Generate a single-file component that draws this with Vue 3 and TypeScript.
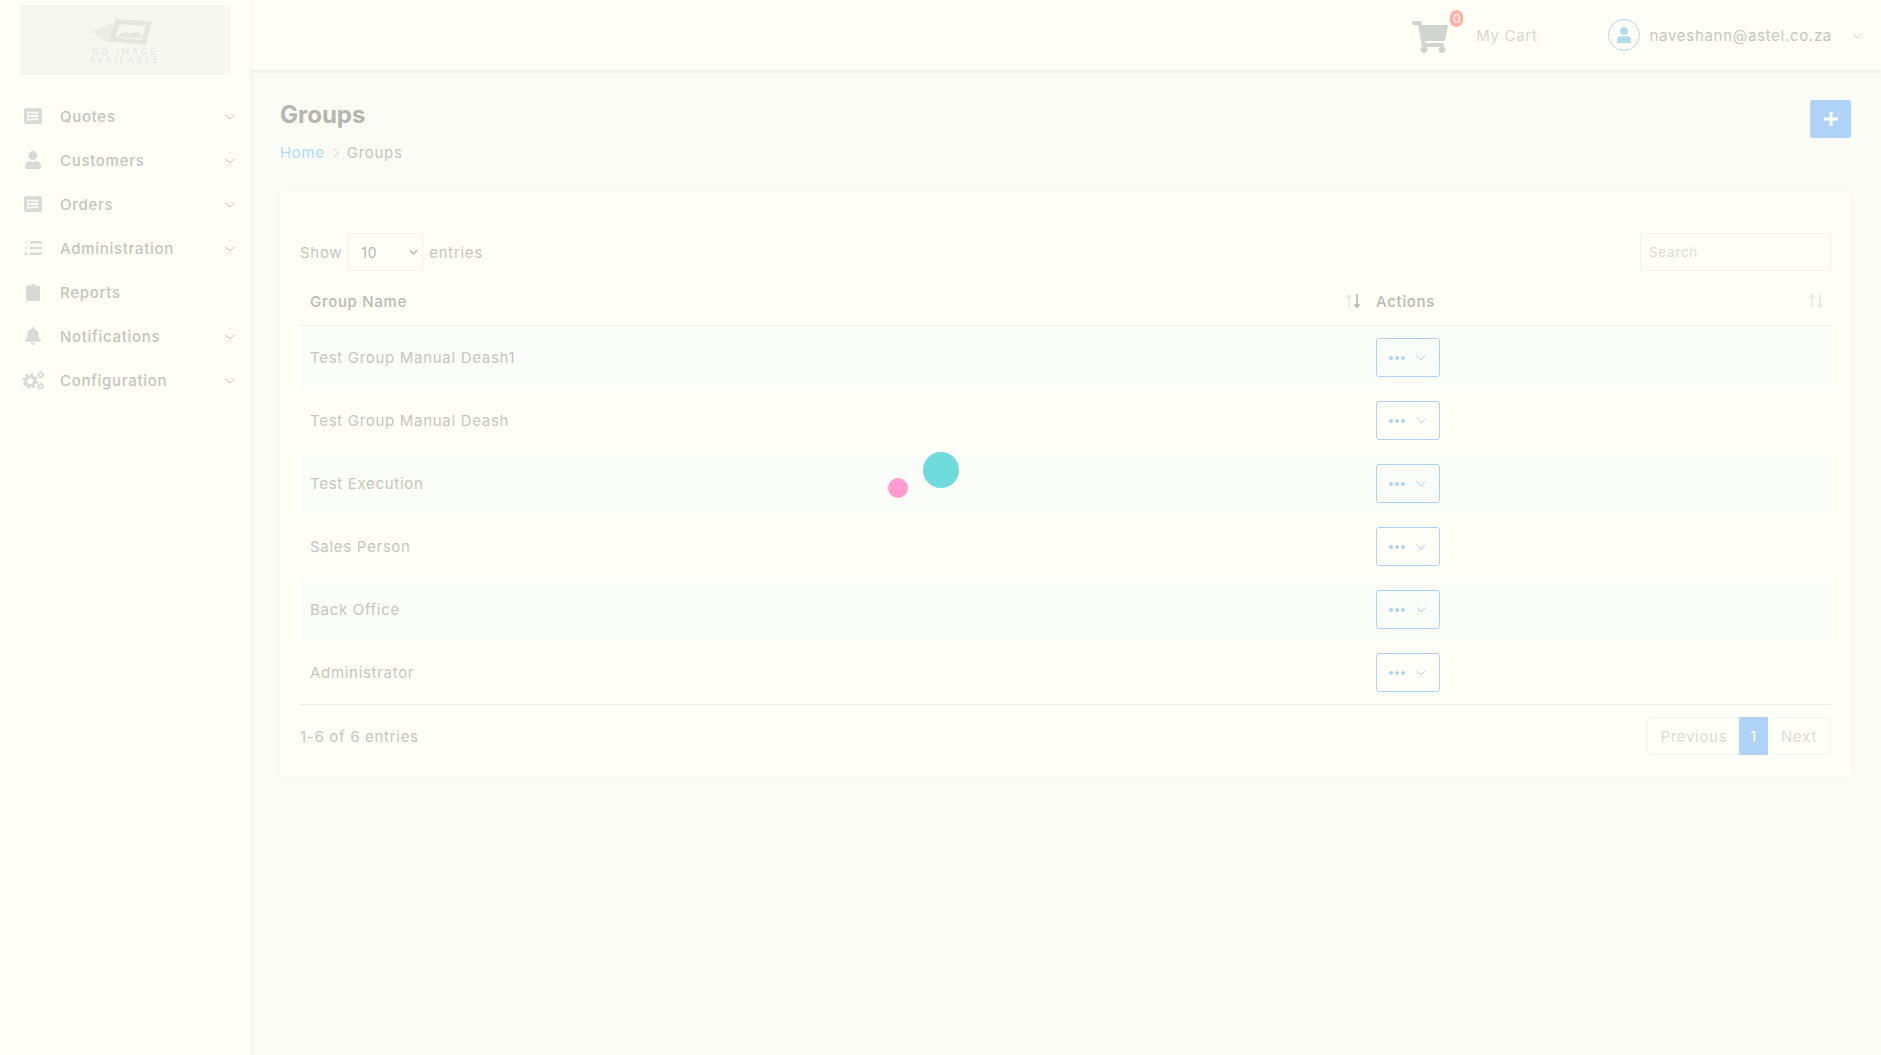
<script setup lang="ts">
type MenuItem = { label: string; icon: string; sub: boolean }

const menu: MenuItem[] = [
  { label: 'Quotes', icon: 'list', sub: true },
  { label: 'Customers', icon: 'user', sub: true },
  { label: 'Orders', icon: 'list', sub: true },
  { label: 'Administration', icon: 'tasks', sub: true },
  { label: 'Reports', icon: 'clipboard', sub: false },
  { label: 'Notifications', icon: 'bell', sub: true },
  { label: 'Configuration', icon: 'cogs', sub: true },
]

const groups = [
  'Test Group Manual Deash1',
  'Test Group Manual Deash',
  'Test Execution',
  'Sales Person',
  'Back Office',
  'Administrator',
]
</script>

<template>
  <div class="layout">
    <aside class="sidebar">
      <div class="logo">
        <svg class="logo-pic" viewBox="0 0 76 30" width="76" height="26">
          <path d="M0 14 L24 4 L24 27 L16 27 Z" fill="#ecede7" />
          <path d="M27 0 L69 3 L62 30 L20 26 Z" fill="#e6e7e1" />
          <path d="M32 6 L62 8 L57 24 L27 21 Z" fill="#f7f7f2" />
          <path d="M31 18 L38 14 L44 17 L50 15 L57 17 L56 22 L30 21 Z" fill="#e6e7e1" />
        </svg>
        <div class="logo-text">NO IMAGE<br />AVAILABLE</div>
      </div>
      <nav class="menu">
        <a v-for="item in menu" :key="item.label" class="menu-item">
          <span class="menu-icon">
            <svg v-if="item.icon === 'list'" viewBox="0 0 512 512" width="18" height="18">
              <path fill="currentColor" d="M464 480H48c-26.51 0-48-21.49-48-48V80c0-26.51 21.49-48 48-48h416c26.51 0 48 21.49 48 48v352c0 26.51-21.49 48-48 48zM128 120c-22.091 0-40 17.909-40 40s17.909 40 40 40 40-17.909 40-40-17.909-40-40-40zm0 96c-22.091 0-40 17.909-40 40s17.909 40 40 40 40-17.909 40-40-17.909-40-40-40zm0 96c-22.091 0-40 17.909-40 40s17.909 40 40 40 40-17.909 40-40-17.909-40-40-40zm288-136v-32c0-6.627-5.373-12-12-12H204c-6.627 0-12 5.373-12 12v32c0 6.627 5.373 12 12 12h200c6.627 0 12-5.373 12-12zm0 96v-32c0-6.627-5.373-12-12-12H204c-6.627 0-12 5.373-12 12v32c0 6.627 5.373 12 12 12h200c6.627 0 12-5.373 12-12zm0 96v-32c0-6.627-5.373-12-12-12H204c-6.627 0-12 5.373-12 12v32c0 6.627 5.373 12 12 12h200c6.627 0 12-5.373 12-12z" />
            </svg>
            <svg v-else-if="item.icon === 'user'" viewBox="0 0 448 512" width="16" height="18">
              <path fill="currentColor" d="M224 256c70.7 0 128-57.3 128-128S294.7 0 224 0 96 57.3 96 128s57.3 128 128 128zm89.6 32h-16.7c-22.2 10.2-46.9 16-72.9 16s-50.6-5.8-72.9-16h-16.7C60.2 288 0 348.2 0 422.4V464c0 26.5 21.5 48 48 48h352c26.5 0 48-21.5 48-48v-41.6c0-74.2-60.2-134.4-134.4-134.4z" />
            </svg>
            <svg v-else-if="item.icon === 'tasks'" viewBox="0 0 18 16" width="18" height="16">
              <path fill="none" stroke="currentColor" stroke-width="1" d="M0.5 2 L1.8 3.2 L3.8 0.6 M0.5 7.5 L1.8 8.7 L3.8 6.1" />
              <circle cx="2" cy="14" r="1.5" fill="currentColor" />
              <path fill="currentColor" d="M6 1h12v2.4H6zM6 6.8h12v2.4H6zM6 12.6h12v2.4H6z" />
            </svg>
            <svg v-else-if="item.icon === 'clipboard'" viewBox="0 0 14 18" width="14" height="18">
              <path fill="currentColor" d="M5 2.4 C5 .4 9 .4 9 2.4 H12.6 C13.4 2.4 14 3 14 3.8 V16.6 C14 17.4 13.4 18 12.6 18 H1.4 C.6 18 0 17.4 0 16.6 V3.8 C0 3 .6 2.4 1.4 2.4 Z" />
            </svg>
            <svg v-else-if="item.icon === 'bell'" viewBox="0 0 448 512" width="16" height="18">
              <path fill="currentColor" d="M224 512c35.32 0 63.97-28.65 63.97-64H160.03c0 35.35 28.65 64 63.97 64zm215.39-149.71c-19.32-20.76-55.47-51.99-55.47-154.29 0-77.7-54.48-139.9-127.94-155.16V32c0-17.67-14.32-32-31.98-32s-31.98 14.33-31.98 32v20.84C118.56 68.1 64.08 130.3 64.08 208c0 102.3-36.15 133.53-55.47 154.29-6 6.45-8.66 14.16-8.61 21.71.11 16.4 12.98 32 32.1 32h383.8c19.12 0 32-15.6 32.1-32 .05-7.55-2.61-15.27-8.61-21.71z" />
            </svg>
            <svg v-else viewBox="0 0 24 20" width="23" height="19">
              <g fill="none" stroke="currentColor">
                <circle cx="8.5" cy="10.5" r="4.6" stroke-width="3.2" />
                <circle cx="8.5" cy="10.5" r="7" stroke-width="2.4" stroke-dasharray="3.3 2.2" />
                <circle cx="19.5" cy="4" r="2" stroke-width="1.5" />
                <circle cx="19.5" cy="4" r="3.2" stroke-width="1.4" stroke-dasharray="1.6 1.2" />
                <circle cx="19.5" cy="16" r="2" stroke-width="1.5" />
                <circle cx="19.5" cy="16" r="3.2" stroke-width="1.4" stroke-dasharray="1.6 1.2" />
              </g>
            </svg>
          </span>
          <span class="menu-label">{{ item.label }}</span>
          <svg v-if="item.sub" class="chev" viewBox="0 0 10 6" width="10" height="6">
            <path d="M.5 .5 L5 5 L9.5 .5" fill="none" stroke="currentColor" stroke-width="1" />
          </svg>
        </a>
      </nav>
    </aside>

    <div class="main">
      <header class="topbar">
        <div class="cart">
          <svg class="cart-icon" viewBox="0 0 576 512" width="36" height="32">
            <path fill="#d0d4ce" d="M528.12 301.319l47.273-208C578.806 78.301 567.391 64 551.99 64H159.208l-9.166-44.81C147.758 8.021 137.93 0 126.529 0H24C10.745 0 0 10.745 0 24v16c0 13.255 10.745 24 24 24h69.883l70.248 343.435C147.325 417.1 136 435.222 136 456c0 30.928 25.072 56 56 56s56-25.072 56-56c0-15.674-6.447-29.835-16.824-40h209.647C430.447 426.165 424 440.326 424 456c0 30.928 25.072 56 56 56s56-25.072 56-56c0-22.172-12.888-41.332-31.579-50.405l5.517-24.276c3.413-15.018-8.002-29.319-23.403-29.319H218.117l-6.545-32h293.145c11.206 0 20.92-7.754 23.403-18.681z" />
          </svg>
          <span class="badge">0</span>
          <span class="cart-label">My Cart</span>
        </div>
        <div class="account">
          <span class="avatar">
            <svg viewBox="0 0 448 512" width="14" height="16">
              <path fill="#aedaea" d="M224 256c70.7 0 128-57.3 128-128S294.7 0 224 0 96 57.3 96 128s57.3 128 128 128zm89.6 32h-16.7c-22.2 10.2-46.9 16-72.9 16s-50.6-5.8-72.9-16h-16.7C60.2 288 0 348.2 0 422.4V464c0 26.5 21.5 48 48 48h352c26.5 0 48-21.5 48-48v-41.6c0-74.2-60.2-134.4-134.4-134.4z" />
            </svg>
          </span>
          <span class="email">naveshann@astel.co.za</span>
          <svg class="chev" viewBox="0 0 10 6" width="10" height="6">
            <path d="M.5 .5 L5 5 L9.5 .5" fill="none" stroke="#d0d2ca" stroke-width="1" />
          </svg>
        </div>
      </header>

      <main class="content">
        <div class="page-head">
          <div>
            <h1>Groups</h1>
            <div class="crumbs">
              <a class="crumb-link">Home</a>
              <svg viewBox="0 0 6 10" width="6" height="10">
                <path d="M.5 .5 L5 5 L.5 9.5" fill="none" stroke="#d0d2ca" stroke-width="1" />
              </svg>
              <span>Groups</span>
            </div>
          </div>
          <button class="add-btn" type="button">
            <svg viewBox="0 0 14 14" width="14" height="14">
              <path d="M7 0v14M0 7h14" stroke="#fffff8" stroke-width="3" />
            </svg>
          </button>
        </div>

        <section class="card">
          <div class="table-top">
            <div class="length">
              <span>Show</span>
              <span class="select">10
                <svg viewBox="0 0 10 6" width="9" height="6">
                  <path d="M1 1 L5 5 L9 1" fill="none" stroke="#b5b6ae" stroke-width="1.6" />
                </svg>
              </span>
              <span>entries</span>
            </div>
            <div class="search">Search</div>
          </div>

          <table class="groups">
            <thead>
              <tr>
                <th class="col-name">
                  <div class="th-in">
                    Group Name
                    <span class="sort">
                      <svg viewBox="0 0 16 16" width="16" height="16">
                        <path d="M4 15V2M1.6 4.6 L4 2 L6.4 4.6" fill="none" stroke="#e8e9e3" stroke-width="1.6" />
                        <path d="M12 1v13M9.6 11.4 L12 14 L14.4 11.4" fill="none" stroke="#b5b6ae" stroke-width="1.6" />
                      </svg>
                    </span>
                  </div>
                </th>
                <th class="col-actions">
                  <div class="th-in">
                    Actions
                    <span class="sort">
                      <svg viewBox="0 0 16 16" width="16" height="16">
                        <path d="M4 15V2M1.6 4.6 L4 2 L6.4 4.6" fill="none" stroke="#e8e9e3" stroke-width="1.6" />
                        <path d="M12 1v13M9.6 11.4 L12 14 L14.4 11.4" fill="none" stroke="#e8e9e3" stroke-width="1.6" />
                      </svg>
                    </span>
                  </div>
                </th>
              </tr>
            </thead>
            <tbody>
              <tr v-for="group in groups" :key="group">
                <td>{{ group }}</td>
                <td>
                  <button class="action-btn" type="button">
                    <svg viewBox="0 0 16 4" width="16" height="4">
                      <circle cx="2" cy="2" r="2" fill="#aed3f7" />
                      <circle cx="8" cy="2" r="2" fill="#aed3f7" />
                      <circle cx="14" cy="2" r="2" fill="#aed3f7" />
                    </svg>
                    <svg viewBox="0 0 10 6" width="10" height="6">
                      <path d="M.5 .5 L5 5 L9.5 .5" fill="none" stroke="#aed3f7" stroke-width="1" />
                    </svg>
                  </button>
                </td>
              </tr>
            </tbody>
          </table>

          <div class="table-bottom">
            <span>1-6 of 6 entries</span>
            <div class="pager">
              <span class="page">Previous</span>
              <span class="page active">1</span>
              <span class="page page-next">Next</span>
            </div>
          </div>
        </section>
      </main>
    </div>

    <span class="dot dot-cyan"></span>
    <span class="dot dot-pink"></span>
  </div>
</template>

<style>
html,
body {
  margin: 0;
  background: #fbfcf6;
}
</style>

<style scoped>
.layout {
  display: flex;
  height: 100vh;
  overflow: hidden;
  background: #fbfcf6;
  font-family: Inter, "Noto Sans", sans-serif;
  font-size: 15px;
  letter-spacing: 0.7px;
  color: #c6c6be;
}

.sidebar {
  width: 250px;
  flex-shrink: 0;
  background: #fffff8;
  box-shadow: 0 0 8px rgba(0, 0, 0, 0.05);
  z-index: 2;
  padding: 5px 20px 0;
  box-sizing: border-box;
}

.logo {
  height: 70px;
  width: 210px;
  background: #f7f7f2;
  display: flex;
  flex-direction: column;
  align-items: center;
  padding-top: 14px;
  box-sizing: border-box;
}

.logo-text {
  font-family: "DejaVu Sans", sans-serif;
  font-size: 9px;
  line-height: 8px;
  letter-spacing: 2.6px;
  text-align: center;
  color: #e4e5df;
  margin-top: 3px;
}

.menu {
  margin-top: 19px;
  margin-right: -20px;
  margin-left: -20px;
}

.menu-item {
  display: flex;
  align-items: center;
  height: 44px;
  padding: 0 15px 0 20px;
  font-weight: 500;
  color: #c4c5bc;
}

.menu-icon {
  width: 26px;
  margin-right: 14px;
  display: flex;
  justify-content: center;
  color: #d6dbd6;
}

.menu-label {
  flex: 1;
}

.chev {
  color: #c4c5bc;
  flex-shrink: 0;
  margin-top: 1px;
}

.main {
  flex: 1;
  min-width: 0;
  display: flex;
  flex-direction: column;
}

.topbar {
  height: 70px;
  flex-shrink: 0;
  background: #fffff8;
  box-shadow: 0 1px 5px rgba(0, 0, 0, 0.08);
  display: flex;
  justify-content: flex-end;
  align-items: center;
  padding-right: 19px;
  box-sizing: border-box;
}

.cart {
  position: relative;
  display: flex;
  align-items: center;
  margin-right: 70px;
  margin-top: 1px;
}

.cart-icon {
  margin-top: 2px;
}

.badge {
  position: absolute;
  top: -9px;
  left: 38px;
  width: 13px;
  height: 17px;
  border-radius: 7px;
  background: #ffb1a8;
  color: #fffff8;
  font-size: 12px;
  line-height: 17px;
  letter-spacing: 0;
  text-align: center;
}

.cart-label {
  margin-left: 28px;
  color: #d6d7cf;
}

.account {
  display: flex;
  align-items: center;
}

.avatar {
  width: 30px;
  height: 30px;
  border: 1px solid #aedaea;
  border-radius: 50%;
  display: flex;
  align-items: center;
  justify-content: center;
  margin-right: 10px;
}

.email {
  margin-right: 20px;
}

.content {
  padding: 30px 30px 0;
  flex: 1;
}

.page-head {
  display: flex;
  justify-content: space-between;
  align-items: flex-start;
}

h1 {
  margin: 0;
  font-size: 24px;
  line-height: 28px;
  font-weight: 700;
  letter-spacing: 0;
  color: #b5b6ae;
  padding-top: 1px;
}

.crumbs {
  margin-top: 14px;
  display: flex;
  align-items: center;
  gap: 8px;
}

.crumb-link {
  color: #aedcf8;
}

.add-btn {
  width: 41px;
  height: 38px;
  border: 0;
  border-radius: 3px;
  background: #aed3f7;
  display: flex;
  align-items: center;
  justify-content: center;
  padding: 0;
}

.card {
  margin-top: 31px;
  background: #fffff8;
  border-radius: 4px;
  box-shadow: 0 0 8px rgba(0, 0, 0, 0.03);
  padding: 40px 20px 21px;
}

.table-top {
  display: flex;
  justify-content: space-between;
  align-items: center;
}

.length {
  display: flex;
  align-items: center;
  gap: 6px;
}

.select {
  width: 75px;
  height: 38px;
  border: 1px solid #f1f1ec;
  border-radius: 3px;
  box-sizing: border-box;
  padding: 0 4px 0 12px;
  display: flex;
  align-items: center;
  justify-content: space-between;
  font-size: 14px;
  color: #b5b6ae;
}

.search {
  width: 191px;
  height: 38px;
  border: 1px solid #f1f1ec;
  border-radius: 3px;
  box-sizing: border-box;
  padding-left: 8px;
  display: flex;
  align-items: center;
  font-size: 13.5px;
  color: #dcdcd5;
}

.groups {
  width: 100%;
  border-collapse: collapse;
  margin-top: 8px;
  table-layout: fixed;
}

.col-name {
  width: 1051px;
}

th {
  height: 44px;
  padding: 0 5px 2px 10px;
  font-weight: 500;
  text-align: left;
  color: #b9bab2;
  border-bottom: 1px solid #eeefe9;
  box-sizing: content-box;
}

.col-actions {
  padding-right: 7px;
}

.th-in {
  display: flex;
  justify-content: space-between;
  align-items: center;
}

.sort {
  display: flex;
}

td {
  height: 63px;
  padding: 0 10px;
}

tbody tr:nth-child(odd) {
  background: #fafdf8;
}

tbody tr:last-child td {
  border-bottom: 1px solid #eeefe9;
}

.action-btn {
  width: 64px;
  height: 39px;
  padding: 0 13px 0 12px;
  background: transparent;
  border: 1px solid #aed3f7;
  border-radius: 3px;
  display: flex;
  align-items: center;
  justify-content: space-between;
}

.table-bottom {
  display: flex;
  justify-content: space-between;
  align-items: center;
  margin-top: 12px;
}

.pager {
  display: flex;
  height: 38px;
  border: 1px solid #f4f4ef;
  border-radius: 3px;
  box-sizing: border-box;
  color: #dcdcd5;
}

.page {
  padding: 0 12px;
  display: flex;
  align-items: center;
}

.page-next {
  padding: 0 13px;
}

.page.active {
  padding: 0 11px;
  background: #aed3f7;
  color: #fffff8;
  margin: -1px 0;
}

.dot {
  position: absolute;
  border-radius: 50%;
  z-index: 5;
}

.dot-cyan {
  left: 923px;
  top: 452px;
  width: 36px;
  height: 36px;
  background: #6fdbdd;
}

.dot-pink {
  left: 888px;
  top: 478px;
  width: 20px;
  height: 20px;
  background: #ff9bcf;
}
</style>
